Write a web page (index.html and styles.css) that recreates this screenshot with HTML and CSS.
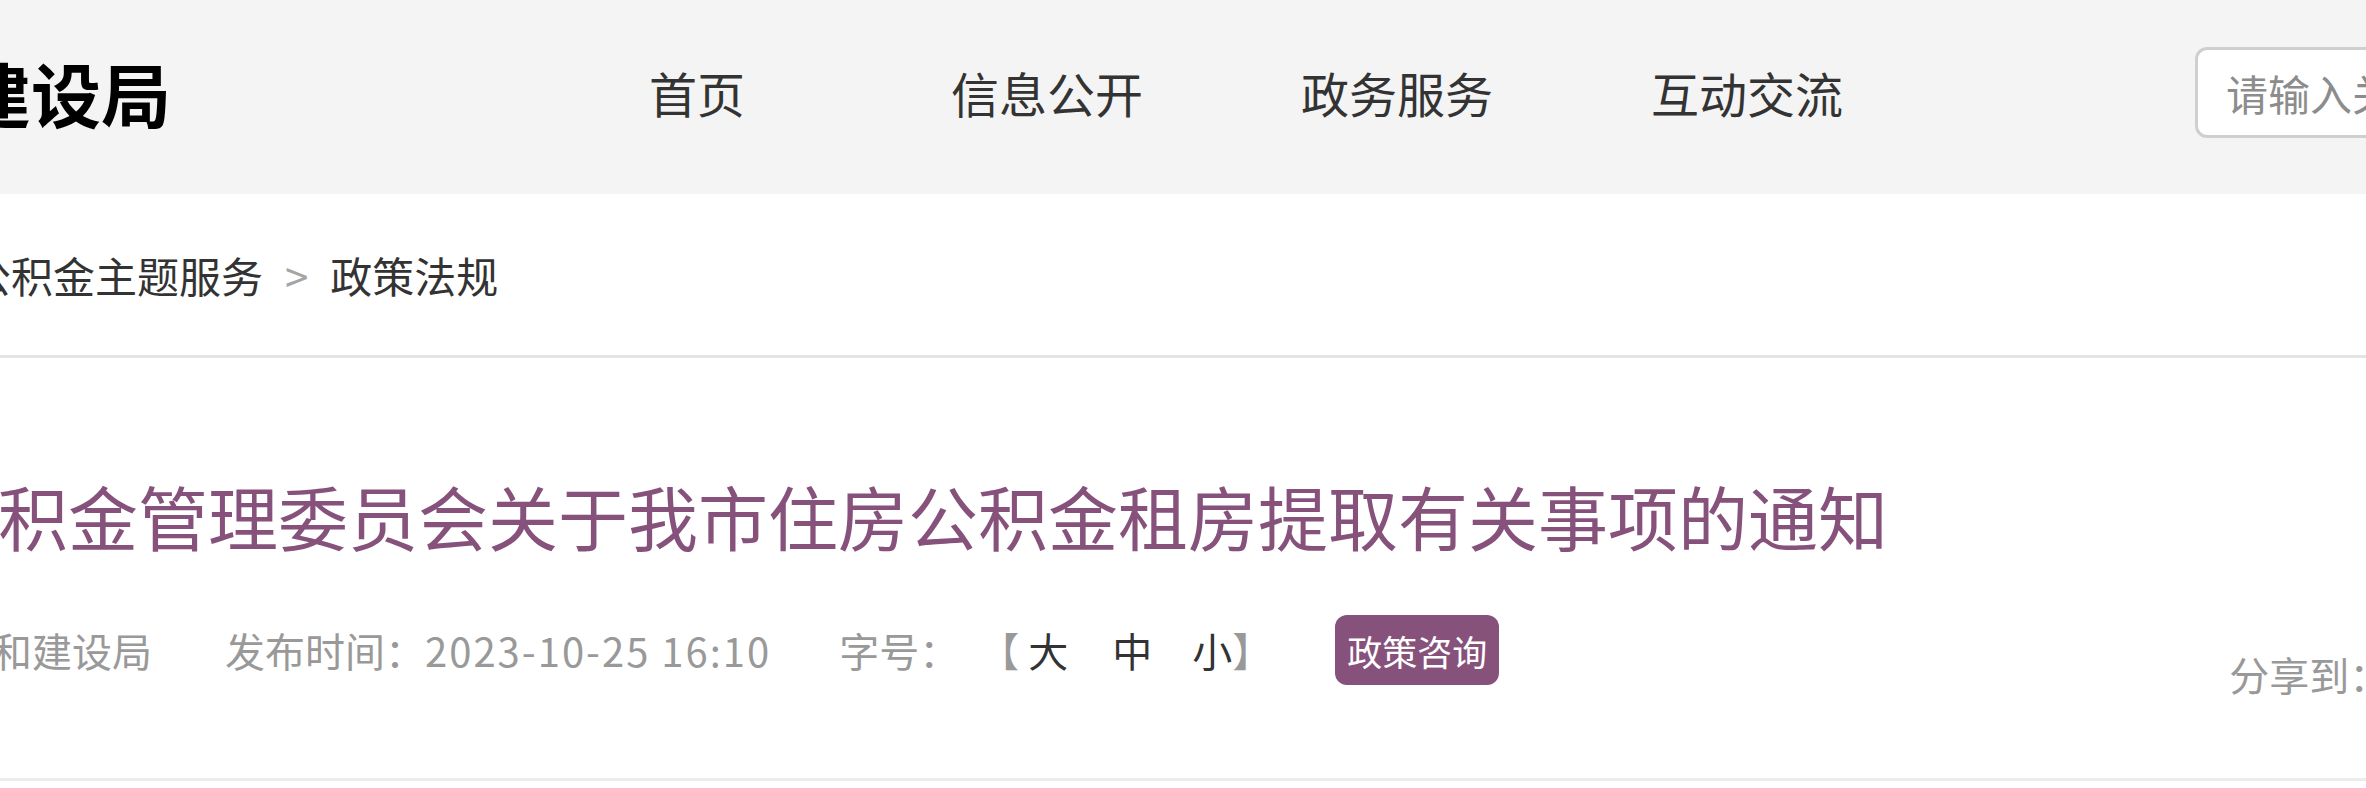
FILE: index.html
```html
<!DOCTYPE html>
<html lang="zh-CN">
<head>
  <meta charset="UTF-8" />
  <title>政策法规 - 住房和建设局</title>
  <link rel="stylesheet" href="styles.css">
</head>
<body>
  <header class="top-bar">
    <div class="logo">住房和城乡建设局</div>

    <nav class="main-nav">
      <a href="#">首页</a>
      <a href="#">信息公开</a>
      <a href="#">政务服务</a>
      <a href="#">互动交流</a>
    </nav>

    <div class="search-box">
      <input type="text" placeholder="请输入关键词搜索" />
    </div>
  </header>

  <div class="crumbs">
    <div class="crumbs-inner">
      <a href="#">住房公积金主题服务</a>
      <span class="sep">&gt;</span>
      <a href="#">政策法规</a>
    </div>
  </div>

  <section class="article-head">
    <h1 class="title">住房公积金管理委员会关于我市住房公积金租房提取有关事项的通知</h1>

    <div class="meta">
      <span class="source">来源：住房和建设局</span>
      <span class="date">发布时间：<span class="num">2023-10-25 16:10</span></span>
      <span class="font-size">
        字号：
        <span class="bracket">【</span><a href="#" class="fs-big">大</a><a href="#" class="fs-mid">中</a><a href="#" class="fs-small">小</a><span class="bracket">】</span>
      </span>
      <span class="tag">政策咨询</span>
      <span class="share">分享到：</span>
    </div>
  </section>
</body>
</html>
```

FILE: styles.css
```css
* {
  margin: 0;
  padding: 0;
  box-sizing: border-box;
}

html, body {
  background: #fff;
  font-family: "Noto Sans CJK SC", "Noto Sans", sans-serif;
  color: #333;
  overflow: hidden;
}

a {
  color: inherit;
  text-decoration: none;
}

/* top bar */
.top-bar {
  height: 194px;
  padding-bottom: 10px;
  background: #f4f4f4;
  display: flex;
  align-items: center;
}

.logo {
  flex: none;
  margin-left: -389px;
  font-size: 70px;
  font-weight: 700;
  color: #000;
  white-space: nowrap;
}

.main-nav {
  flex: none;
  display: flex;
  margin-left: 351px;
}

.main-nav a {
  width: 350px;
  text-align: center;
  font-size: 48px;
  color: #333;
}

.search-box {
  flex: none;
  margin-left: 273px;
  width: 520px;
  height: 91px;
  border: 3px solid #cfcfcf;
  border-radius: 12px;
  background: #fff;
  display: flex;
  align-items: center;
  padding-left: 28px;
}

.search-box input {
  border: none;
  outline: none;
  background: transparent;
  width: 100%;
  font-family: inherit;
  font-size: 42px;
  color: #333;
}

.search-box input::placeholder {
  color: #8c8c8c;
}

/* breadcrumb */
.crumbs {
  height: 164px;
  border-bottom: 3px solid #e4e4e4;
  display: flex;
  align-items: center;
}

.crumbs-inner {
  margin-left: -115px;
  font-size: 42px;
  white-space: nowrap;
  display: flex;
  align-items: center;
}

.crumbs .sep {
  margin: 0 22px;
  color: #a5a5a5;
}

/* article header */
.article-head {
  padding-top: 108px;
  padding-bottom: 93px;
  border-bottom: 3px solid #ececec;
}

.title {
  margin-left: -212px;
  font-size: 70px;
  font-weight: 400;
  line-height: 100px;
  color: #86527c;
  white-space: nowrap;
}

.meta {
  margin-top: 49px;
  height: 70px;
  display: flex;
  align-items: center;
  font-size: 40px;
  color: #999;
  white-space: nowrap;
}

.source {
  margin-left: -208px;
  margin-right: 73px;
}

.date {
  margin-right: 68px;
}

.date .num {
  letter-spacing: 2px;
}

.font-size {
  display: flex;
  align-items: center;
}

.bracket {
  color: #999;
}

.font-size .bracket:first-child {
  margin-left: 20px;
}

.font-size a {
  color: #333;
}

.fs-big {
  margin-left: 9px;
}

.fs-mid {
  margin-left: 44px;
}

.fs-small {
  margin-left: 40px;
}

.tag {
  margin-left: 63px;
  height: 70px;
  padding: 0 12px;
  border-radius: 12px;
  background: #86527c;
  color: #fff;
  font-size: 35px;
  display: flex;
  align-items: center;
}

.share {
  margin-left: 730px;
  margin-top: 48px;
}
```
